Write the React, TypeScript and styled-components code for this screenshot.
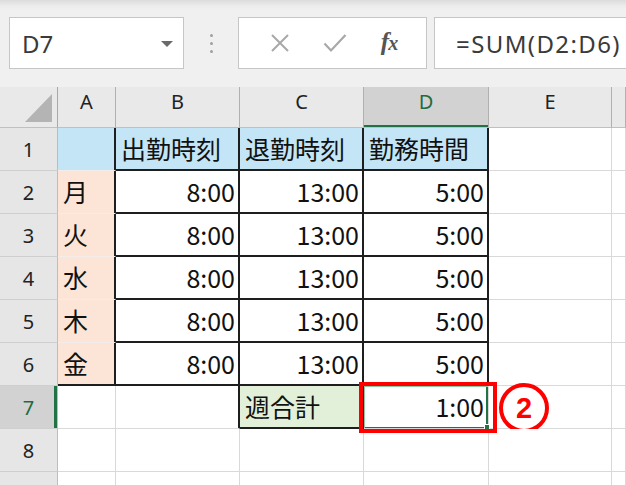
import styled, { createGlobalStyle } from 'styled-components';

const GlobalStyle = createGlobalStyle`
  html, body {
    margin: 0;
    padding: 0;
    background: #ffffff;
  }
  body {
    width: 626px;
    height: 485px;
    overflow: hidden;
    font-family: 'Noto Sans', 'Noto Sans CJK JP', sans-serif;
  }
  * {
    box-sizing: border-box;
  }
`;

const excelGreen = '#217346';
const darkLine = '#1e1e1e';
const gridLine = '#d9d9d9';

const Window = styled.div`
  width: 626px;
  height: 485px;
  overflow: hidden;
  display: flex;
  flex-direction: column;
`;

const Toolbar = styled.div`
  height: 87px;
  flex: none;
  display: flex;
  align-items: flex-start;
  padding: 17px 0 0 9px;
  background: linear-gradient(#dcdcdc 0px, #ececec 6px, #f0f0f0 10px, #f0f0f0 100%);
`;

const Box = styled.div<{ $width: number }>`
  width: ${(p) => p.$width}px;
  height: 52px;
  flex: none;
  background: #ffffff;
  border: 1px solid #c6c6c6;
  display: flex;
  align-items: center;
`;

const NameBox = styled(Box)`
  justify-content: space-between;
  padding: 0 10px 0 12px;
  font-size: 24px;
  color: #3a3a3a;
`;

const DropArrow = styled.span`
  width: 0;
  height: 0;
  border-left: 6px solid transparent;
  border-right: 6px solid transparent;
  border-top: 6px solid #6a6a6a;
  margin-top: 2px;
`;

const Grip = styled.div`
  width: 54px;
  height: 52px;
  flex: none;
  display: flex;
  flex-direction: column;
  align-items: center;
  justify-content: center;
  gap: 5px;

  & span {
    width: 3px;
    height: 3px;
    border-radius: 50%;
    background: #a0a0a0;
  }
`;

const ButtonBox = styled(Box)`
  justify-content: space-around;
  padding: 0 12px 0 14px;
  margin-right: 7px;
`;

const Fx = styled.span`
  font-family: 'Liberation Serif', serif;
  font-style: italic;
  font-weight: bold;
  font-size: 25px;
  color: #555555;
  letter-spacing: -1px;
  margin-top: -2px;

  & small {
    font-size: 20px;
  }
`;

const FormulaBox = styled(Box)`
  flex: 1;
  border-right: none;
  padding-left: 21px;
  font-size: 24px;
  letter-spacing: 1.4px;
  color: #3a3a3a;
  white-space: nowrap;
`;

const Sheet = styled.div`
  display: grid;
  grid-template-columns: 58px 58px 124px 124px 125px 123px 1fr;
  grid-template-rows: 41px repeat(9, 43px);
  background: #ffffff;
`;

const Corner = styled.div`
  position: relative;
  background: #e9e9e9;
  border-right: 1px solid #a9a9a9;
  border-bottom: 1px solid #c0c0c0;

  &::after {
    content: '';
    position: absolute;
    right: 5px;
    bottom: 5px;
    width: 0;
    height: 0;
    border-left: 27px solid transparent;
    border-bottom: 28px solid #b4b4b4;
  }
`;

const ColHead = styled.div<{ $selected?: boolean }>`
  display: flex;
  align-items: center;
  justify-content: center;
  padding-bottom: 12px;
  background: ${(p) => (p.$selected ? '#d2d2d2' : '#e9e9e9')};
  border-right: 1px solid #b0b0b0;
  border-bottom: 1px solid #c0c0c0;
  box-shadow: ${(p) => (p.$selected ? `inset 0 -2px 0 ${excelGreen}` : 'none')};
  color: ${(p) => (p.$selected ? '#1f6b42' : '#222222')};
  font-family: 'Noto Sans', sans-serif;
  font-size: 20px;
`;

const RowHead = styled.div<{ $selected?: boolean }>`
  display: flex;
  align-items: center;
  justify-content: center;
  background: ${(p) => (p.$selected ? '#d2d2d2' : '#e6e6e6')};
  border-right: 1px solid #bdbdbd;
  border-bottom: 1px solid #cfcfcf;
  box-shadow: ${(p) => (p.$selected ? `inset -3px 0 0 ${excelGreen}` : 'none')};
  color: ${(p) => (p.$selected ? '#1f6b42' : '#222222')};
  font-family: 'Noto Sans', sans-serif;
  font-size: 20px;
`;

type Edge = 'grid' | 'dark' | 'soft';

const edgeColor = (e: Edge) => (e === 'dark' ? darkLine : e === 'soft' ? '#f3ece8' : gridLine);

const edgeShadow = (r: Edge, b: Edge, selected?: boolean) => {
  const parts: string[] = [];
  if (selected) {
    parts.push('inset 1px 1px 0 #8cc9a3', `inset -2px -1px 0 ${excelGreen}`);
  }
  if (r === 'dark') parts.push(`inset -1px 0 0 ${darkLine}`);
  if (b === 'dark') parts.push(`inset 0 -1px 0 ${darkLine}`);
  return parts.length ? parts.join(', ') : 'none';
};

const Cell = styled.div<{ $bg: string; $align: 'left' | 'right'; $r: Edge; $b: Edge; $selected?: boolean }>`
  position: relative;
  z-index: ${(p) => (p.$selected ? 2 : 'auto')};
  display: flex;
  align-items: center;
  justify-content: ${(p) => (p.$align === 'right' ? 'flex-end' : 'flex-start')};
  padding: 0 4px 2px 5px;
  background: ${(p) => p.$bg};
  border-right: 1px solid ${(p) => edgeColor(p.$r)};
  border-bottom: 1px solid ${(p) => edgeColor(p.$b)};
  box-shadow: ${(p) => edgeShadow(p.$r, p.$b, p.$selected)};
  font-family: 'Noto Sans CJK JP', sans-serif;
  font-size: 25px;
  line-height: 1;
  color: #111111;
  white-space: nowrap;
`;

const FillHandle = styled.span`
  position: absolute;
  right: -2px;
  bottom: -2px;
  width: 6px;
  height: 6px;
  background: ${excelGreen};
  border: 1px solid #ffffff;
`;

const RedFrame = styled.span`
  position: absolute;
  left: -5px;
  top: -4px;
  width: 138px;
  height: 51px;
  border: 4px solid #ff0000;
  pointer-events: none;
`;

const Badge = styled.span`
  position: absolute;
  left: 10px;
  top: -3px;
  width: 50px;
  height: 50px;
  border: 4px solid #ff0000;
  border-radius: 50%;
  background: #ffffff;
  display: flex;
  align-items: center;
  justify-content: center;
  color: #ff0000;
  font-family: 'Liberation Sans', sans-serif;
  font-weight: bold;
  font-size: 29px;
  line-height: 1;
`;

const BLUE = '#c3e5f6';
const PEACH = '#fce4d6';
const GREEN = '#e2f0d9';
const WHITE = '#ffffff';

interface CellSpec {
  text?: string;
  bg?: string;
  align?: 'left' | 'right';
  r?: Edge;
  b?: Edge;
  selected?: boolean;
  badge?: string;
}

const days = ['月', '火', '水', '木', '金'];

const buildRows = (): CellSpec[][] => {
  const rows: CellSpec[][] = [];
  rows.push([
    { bg: BLUE, r: 'dark', b: 'soft' },
    { text: '出勤時刻', bg: BLUE, r: 'dark', b: 'dark' },
    { text: '退勤時刻', bg: BLUE, r: 'dark', b: 'dark' },
    { text: '勤務時間', bg: BLUE, r: 'dark', b: 'dark' },
    {},
    {},
  ]);
  days.forEach((day, i) => {
    const last = i === days.length - 1;
    rows.push([
      { text: day, bg: PEACH, r: 'dark', b: last ? 'dark' : 'soft' },
      { text: '8:00', align: 'right', r: 'dark', b: 'dark' },
      { text: '13:00', align: 'right', r: 'dark', b: 'dark' },
      { text: '5:00', align: 'right', r: 'dark', b: 'dark' },
      {},
      {},
    ]);
  });
  rows.push([
    {},
    { r: 'dark' },
    { text: '週合計', bg: GREEN, r: 'dark', b: 'dark' },
    { text: '1:00', align: 'right', selected: true },
    { badge: '2' },
    {},
  ]);
  rows.push([{}, {}, {}, {}, {}, {}]);
  rows.push([{}, {}, {}, {}, {}, {}]);
  return rows;
};

// the F header and row 9 number sit past the window edge, only their cells show
const columns = ['A', 'B', 'C', 'D', 'E', ''];

function App() {
  const rows = buildRows();

  return (
    <Window>
      <GlobalStyle />
      <Toolbar>
        <NameBox $width={175}>
          <span>D7</span>
          <DropArrow />
        </NameBox>
        <Grip>
          <span />
          <span />
          <span />
        </Grip>
        <ButtonBox $width={189}>
          <svg width="20" height="18" viewBox="0 0 20 18">
            <path d="M2 1 L18 17 M18 1 L2 17" stroke="#a8a8a8" strokeWidth="2" fill="none" />
          </svg>
          <svg width="24" height="20" viewBox="0 0 24 20">
            <path d="M1.5 10.5 L8 17.5 L22.5 2" stroke="#a8a8a8" strokeWidth="2.2" fill="none" />
          </svg>
          <Fx>
            f<small>x</small>
          </Fx>
        </ButtonBox>
        <FormulaBox $width={200}>=SUM(D2:D6)</FormulaBox>
      </Toolbar>
      <Sheet>
        <Corner />
        {columns.map((c, i) => (
          <ColHead key={`c${i}`} $selected={c === 'D'}>
            {c}
          </ColHead>
        ))}
        {rows.map((row, ri) => (
          <>
            <RowHead key={`h${ri}`} $selected={ri === 6}>
              {ri < 8 ? ri + 1 : ''}
            </RowHead>
            {row.map((cell, ci) => (
              <Cell
                key={`${ri}-${ci}`}
                $bg={cell.bg ?? WHITE}
                $align={cell.align ?? 'left'}
                $r={cell.r ?? 'grid'}
                $b={cell.b ?? 'grid'}
                $selected={cell.selected}
              >
                {cell.text}
                {cell.selected && <FillHandle />}
                {cell.selected && <RedFrame />}
                {cell.badge && <Badge>{cell.badge}</Badge>}
              </Cell>
            ))}
          </>
        ))}
      </Sheet>
    </Window>
  );
}

export default App;
